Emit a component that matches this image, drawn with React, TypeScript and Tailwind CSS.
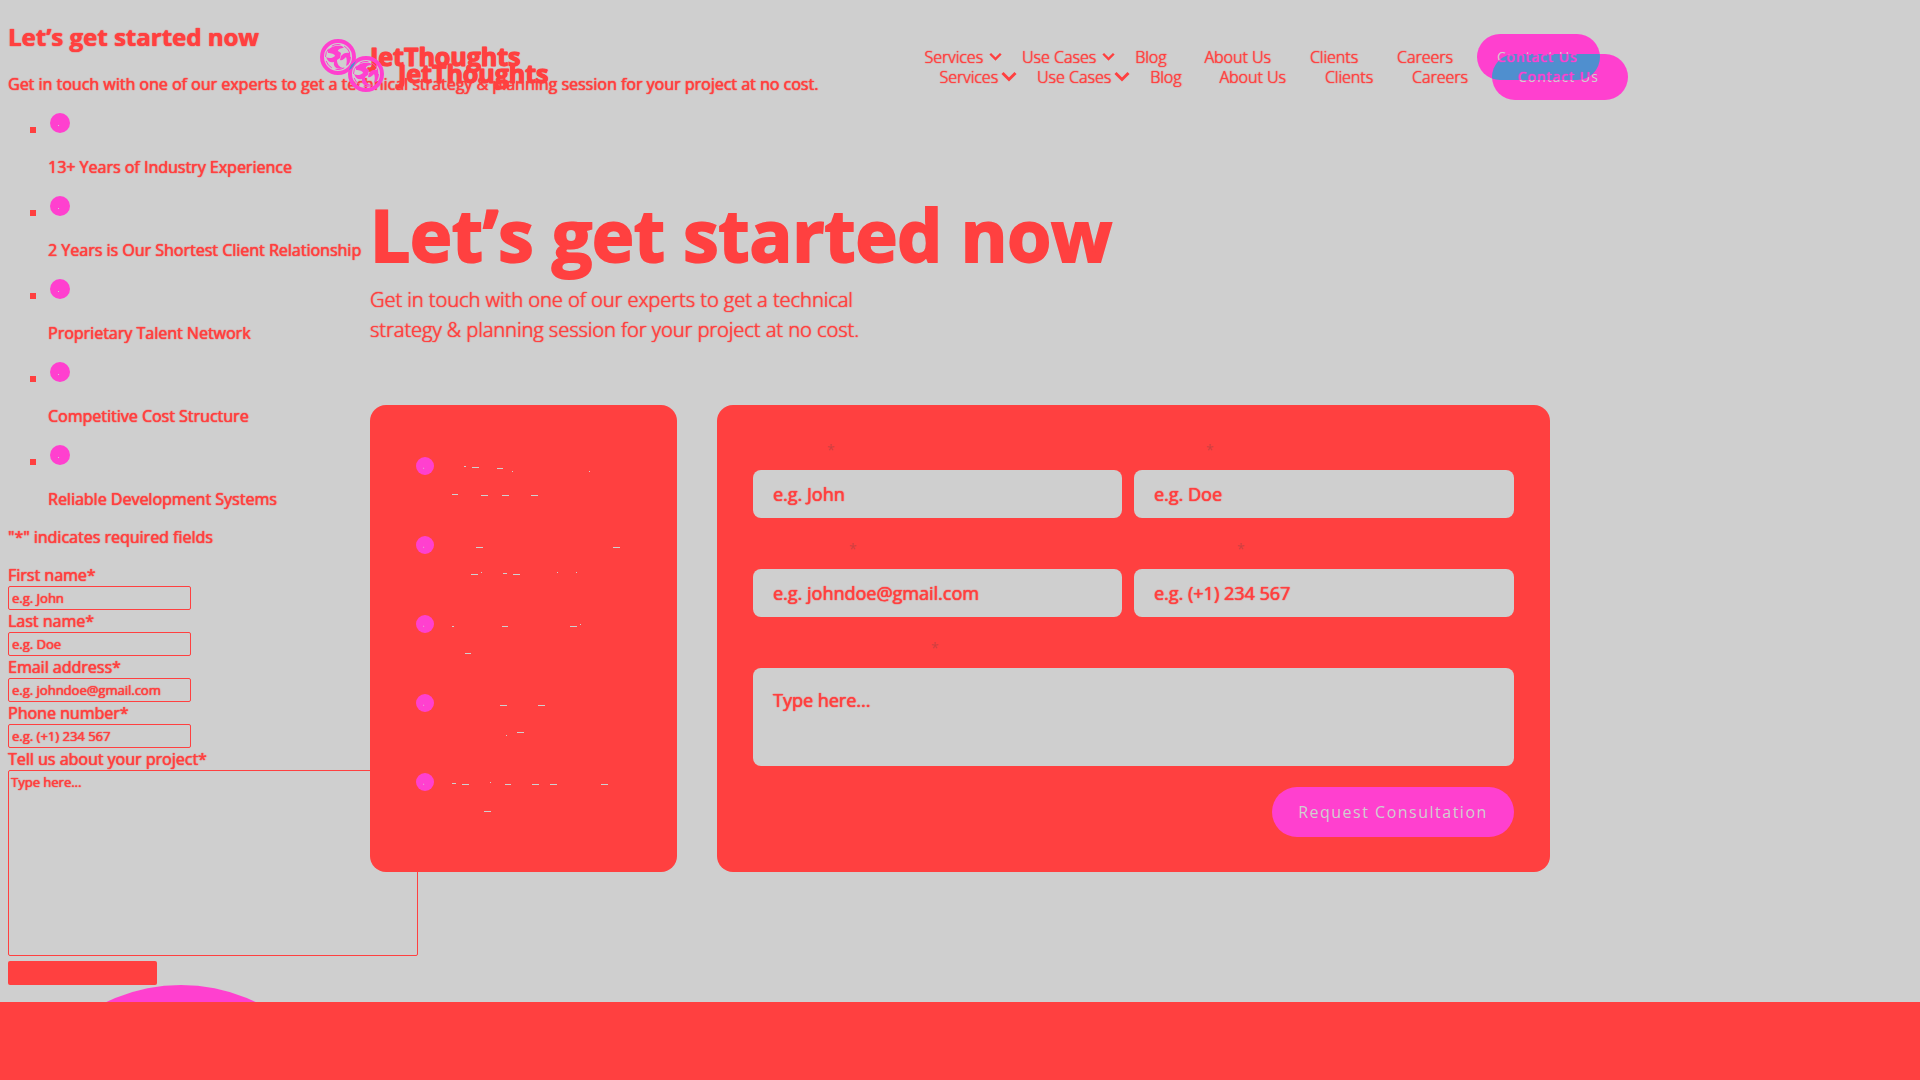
import React from "react";
import clsx from "clsx";

type Mark = [x: number, y: number, width: number];

const benefits = [
  "13+ Years of Industry Experience",
  "2 Years is Our Shortest Client Relationship",
  "Proprietary Talent Network",
  "Competitive Cost Structure",
  "Reliable Development Systems",
];

const benefitMarks: Mark[][] = [
  [[15, 9, 2], [23, 10, 7], [48, 11, 6], [63, 14, 1], [140, 14, 1], [3, 37, 6], [32, 38, 7], [53, 38, 7], [82, 38, 7]],
  [[27, 11, 7], [164, 11, 7], [22, 38, 7], [64, 38, 7], [54, 37, 4], [32, 36, 1], [108, 36, 1], [127, 36, 1]],
  [[3, 11, 2], [53, 11, 6], [121, 11, 7], [131, 9, 1], [16, 38, 6]],
  [[51, 11, 7], [89, 11, 7], [68, 38, 7], [57, 41, 1]],
  [[3, 10, 4], [13, 11, 7], [56, 11, 6], [83, 11, 7], [101, 11, 7], [152, 11, 7], [41, 9, 1], [35, 38, 7]],
];

const fields = [
  { id: "first", label: "First name", placeholder: "e.g. John", star: "pl-[74px]" },
  { id: "last", label: "Last name", placeholder: "e.g. Doe", star: "pl-[72px]" },
  { id: "email", label: "Email address", placeholder: "e.g. johndoe@gmail.com", star: "pl-[96px]" },
  { id: "phone", label: "Phone number", placeholder: "e.g. (+1) 234 567", star: "pl-[103px]" },
];

const fieldText = "placeholder:text-[#ff4040] [text-shadow:0_0_1px_#ff4040,0_0_1px_#ff4040]";

function Dot({ className }: { className: string }) {
  return (
    <svg viewBox="0 0 20 20" className={clsx("block shrink-0", className)} aria-hidden="true">
      <circle cx="10" cy="10" r="10" fill="#ff40cf" />
      <rect x="8" y="12" width="1" height="1" fill="#cfcfcf" />
    </svg>
  );
}

function Logo({ overlap = false }: { overlap?: boolean }) {
  return (
    <a href="#home" className="flex items-center gap-[14px] text-[25px] leading-[34px] font-bold">
      <svg viewBox="0 0 36 36" className="size-9" aria-hidden="true">
        <circle cx="18" cy="18" r="16" fill="none" stroke="#ff40cf" strokeWidth="4" />
        <circle cx="18" cy="18" r="12.5" fill="none" stroke="#ff40cf" strokeWidth="1" strokeDasharray="9 4" />
        <path
          fill="#ff40cf"
          d="M8 11C11 7 17 6 22 7L24 9C21 9 18 10 18 12L21 14L20 19L17 21C17 25 19 28 23 29C17 31 13 28 14 23C11 24 8 23 6 18C9 20 13 19 15 17C15 15 11 14 8 14ZM21 17C23 14 27 13 30 14C31 20 30 25 26 27C27 23 27 20 26 18C24 20 22 22 20 21Z"
        />
        {overlap && <path d="M1 14L3 9L8 5L6 9L3 13Z" fill="#4f8fcf" />}
      </svg>
      <span className="pb-0.5 [-webkit-text-stroke:1px_#ff4040]">JetThoughts</span>
    </a>
  );
}

function Chevron({ large }: { large: boolean }) {
  return (
    <svg
      viewBox="0 0 16 11"
      className={clsx("absolute top-1/2 right-0.5 -translate-y-1/2", large ? "h-[11px] w-4" : "h-[9px] w-[13px]")}
      aria-hidden="true"
    >
      <path d="M1.5 1.5L8 8L14.5 1.5" fill="none" stroke="#ff4040" strokeWidth="3" />
    </svg>
  );
}

function Nav({ large = false }: { large?: boolean }) {
  return (
    <nav className="flex items-center text-[16px] leading-6 font-light whitespace-nowrap">
      <a href="#services" className="relative mr-[18px] pr-[21px]">Services<Chevron large={large} /></a>
      <a href="#cases" className="relative mr-[18px] pr-[21px]">Use Cases<Chevron large={large} /></a>
      <a href="#blog" className="mr-[38px]">Blog</a>
      <a href="#about" className="mr-[39px]">About Us</a>
      <a href="#clients" className="mr-[39px]">Clients</a>
      <a href="#careers" className="mr-6">Careers</a>
      {large ? (
        <a href="#contact" className="relative flex h-[46px] w-[136px] items-center overflow-hidden rounded-full bg-[#ff40cf] pl-[26px] text-[14px] font-normal tracking-[1px] text-[#cfcfcf] text-shadow-none">
          Contact Us
          <span aria-hidden="true" className="absolute -top-5 -left-[15px] h-[46px] w-[123px] overflow-hidden rounded-full bg-[#4f8fcf] text-[#ff40cf] [text-shadow:0_0_1px_#ff40cf,0_0_1px_#ff40cf]">
            <span className="absolute top-[11px] left-5">Contact Us</span>
            <span className="absolute top-[31px] left-[41px]">Contact Us</span>
          </span>
        </a>
      ) : (
        <a href="#contact" className="flex h-[46px] w-[123px] items-center rounded-full bg-[#ff40cf] pl-5 text-[14px] font-normal tracking-[1px] text-[#cfcfcf] text-shadow-none">
          Contact Us
        </a>
      )}
    </nav>
  );
}

function PlainPage() {
  return (
    <section className="col-start-1 row-start-1 px-2 pt-5 text-[16px] leading-[22px] font-medium">
      <h2 className="text-[24px] leading-[33px] font-bold">Let’s get started now</h2>
      <p className="mt-5">
        Get in touch with one of our experts to get a technical strategy &amp; planning session for your project at no cost.
      </p>
      <ul className="mt-[18px] flex flex-col gap-[13px] pl-[22px]">
        {benefits.map((text) => (
          <li key={text} className="h-[70px]">
            <div className="flex items-end gap-[14px]">
              <span className="size-1.5 bg-[#ff4040]" />
              <Dot className="size-5" />
            </div>
            <p className="mt-[23px] pl-[18px]">{text}</p>
          </li>
        ))}
      </ul>
      <p className="mt-[11px]">"*" indicates required fields</p>
      <form className="mt-4">
        {fields.map((f) => (
          <div key={f.id}>
            <label htmlFor={`plain-${f.id}`} className="block">{f.label}*</label>
            <input
              id={`plain-${f.id}`}
              placeholder={f.placeholder}
              className={clsx("block h-6 w-[183px] rounded-[2px] border border-[#ff4040] px-[3px] text-[13px]", fieldText)}
            />
          </div>
        ))}
        <label htmlFor="plain-project" className="block">Tell us about your project*</label>
        <textarea
          id="plain-project"
          placeholder="Type here..."
          className={clsx("block h-[186px] w-[410px] resize-none rounded-[2px] border border-[#ff4040] px-[2px] py-[2px] text-[13px] leading-[18px]", fieldText)}
        />
        <button type="submit" aria-label="Request Consultation" className="mt-[5px] block h-6 w-[149px] rounded-[2px] bg-[#ff4040]" />
      </form>
      <div className="h-[17px] overflow-hidden pl-[1px]">
        <div className="size-[344px] rounded-full bg-[#ff40cf]" />
      </div>
    </section>
  );
}

function StyledPage() {
  return (
    <section className="relative col-start-1 row-start-1">
      <header className="grid pt-[34px]">
        <div className="col-start-1 row-start-1">
          <div className="mx-auto flex w-full max-w-[1280px] items-center justify-between">
            <Logo />
            <Nav />
          </div>
        </div>
        <div className="col-start-1 row-start-1 pt-5 pl-14">
          <div className="mx-auto flex w-full max-w-[1280px] items-center justify-between">
            <div className="pb-1.5"><Logo overlap /></div>
            <Nav large />
          </div>
        </div>
      </header>
      <main className="mx-auto mt-[85px] w-full max-w-[1180px]">
        <h1 className="text-[71px] leading-[100px] font-bold [-webkit-text-stroke:2px_#ff4040]">Let’s get started now</h1>
        <p className="max-w-[500px] text-[20px] leading-[30px] font-light">
          Get in touch with one of our experts to get a technical strategy &amp; planning session for your project at no cost.
        </p>
        <div className="mt-[60px] grid grid-cols-[307fr_833fr] gap-10">
          <ul className="flex flex-col gap-[31px] rounded-2xl bg-[#ff4040] px-[46px] pt-[52px]">
            {benefitMarks.map((marks, i) => (
              <li key={benefits[i]} aria-label={benefits[i]} className="flex h-12 gap-[15px]">
                <Dot className="size-[18px]" />
                <svg viewBox="0 0 180 48" className="h-12 w-[180px] shrink-0" aria-hidden="true">
                  {marks.map(([x, y, w]) => (
                    <rect key={`${x}-${y}`} x={x} y={y} width={w} height="1" fill="#cfcfcf" />
                  ))}
                </svg>
              </li>
            ))}
          </ul>
          <form className="rounded-2xl bg-[#ff4040] px-9 pt-8 pb-[35px] text-[18px] font-medium">
            <div className="grid grid-cols-[369fr_380fr] gap-x-3">
              {fields.map((f) => (
                <div key={f.id} className="pb-[18px]">
                  <label htmlFor={f.id} aria-label={f.label} className={clsx("block h-[33px] pt-[3px] text-[14px] leading-5 font-normal text-[#cf4040] text-shadow-none", f.star)}>*</label>
                  <input
                    id={f.id}
                    placeholder={f.placeholder}
                    className={clsx("block h-12 w-full rounded-lg bg-[#cfcfcf] px-5", fieldText)}
                  />
                </div>
              ))}
            </div>
            <label htmlFor="project" aria-label="Tell us about your project" className="block h-[33px] pt-[3px] pl-[178px] text-[14px] leading-5 font-normal text-[#cf4040] text-shadow-none">*</label>
            <textarea
              id="project"
              placeholder="Type here..."
              className={clsx("block h-[98px] w-full resize-none rounded-lg bg-[#cfcfcf] px-5 py-5 leading-[25px]", fieldText)}
            />
            <button type="submit" className="mt-[21px] ml-auto block h-[50px] w-[242px] rounded-full bg-[#ff40cf] text-[16px] font-normal tracking-[1.5px] text-[#cfcfcf] text-shadow-none">
              Request Consultation
            </button>
          </form>
        </div>
      </main>
    </section>
  );
}

export default function App() {
  return (
    <div className="flex min-h-screen flex-col overflow-hidden bg-[#cfcfcf] font-['Open_Sans',sans-serif] text-[#ff4040] [text-shadow:0_0_1px_#ff4040,0_0_1px_#ff4040]">
      <div className="grid">
        <PlainPage />
        <StyledPage />
      </div>
      <footer className="grow bg-[#ff4040]" />
    </div>
  );
}
